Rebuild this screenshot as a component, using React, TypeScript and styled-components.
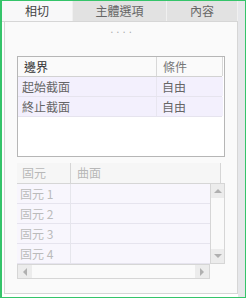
import React from 'react';
import styled, {createGlobalStyle} from 'styled-components';

const Global = createGlobalStyle`
  html, body { margin: 0; padding: 0; background: #fff; }
  body { font-family: "Noto Sans CJK TC", "Noto Sans", sans-serif; }
`;

const Frame = styled.div`
  width: 246px;
  height: 298px;
  box-sizing: border-box;
  border: 1px solid #35c46a;
  border-left-width: 2px;
  display: flex;
  background: #fff;
`;
const Main = styled.div`
  width: 236px;
  display: flex;
  flex-direction: column;
`;
const Strip = styled.div`
  flex: 1;
  background: #e6e7ea;
`;
const TabBar = styled.div`
  height: 20px;
  display: flex;
  border-bottom: 1px solid #d6d6d6;
`;
const Tab = styled.div`
  width: ${({w}: {w: number; active?: boolean}) => w}px;
  box-sizing: border-box;
  border-right: 1px solid #f0f0f0;
  background: ${({active}: {w: number; active?: boolean}) => active ? '#f8f8f9' : '#e2e2e2'};
  color: ${({active}: {w: number; active?: boolean}) => active ? '#444' : '#666'};
  font-size: 12px;
  display: flex;
  align-items: center;
  justify-content: center;
  line-height: 20px;
`;
const Body = styled.div`
  flex: 1;
  padding: 0 0 3px 2px;
  display: flex;
`;
const Panel = styled.div`
  flex: 1;
  border: 1px solid #d6d6d6;
  border-top: none;
  background: #fafafa;
  padding: 0 12px;
  display: flex;
  flex-direction: column;
`;
const Dots = styled.div`
  height: 34px;
  text-align: center;
  color: #aaa;
  font-size: 10px;
  letter-spacing: 3px;
  padding-left: 3px;
  line-height: 15px;
  font-family: "DejaVu Sans", sans-serif;
`;
const Boundary = styled.div`
  width: 208px;
  height: 101px;
  box-sizing: border-box;
  border: 1px solid #b6b6b6;
  background: #fff;
  padding-right: 2px;
`;
const Row = styled.div`
  display: grid;
  grid-template-columns: ${({cols}: {cols: string; head?: boolean}) => cols};
  height: 20px;
  box-sizing: border-box;
  border-bottom: 1px solid ${({head}: {cols: string; head?: boolean}) => head ? '#d2d2d2' : '#e6e4ee'};
`;
const Cell = styled.div`
  font-size: 12px;
  line-height: 19px;
  padding-left: ${({pad}: {pad: number; tone: string; bg: string; line?: string}) => pad}px;
  color: ${({tone}: {pad: number; tone: string; bg: string; line?: string}) => tone};
  background: ${({bg}: {pad: number; tone: string; bg: string; line?: string}) => bg};
  border-right: 1px solid ${({line}: {pad: number; tone: string; bg: string; line?: string}) => line ?? 'transparent'};
  white-space: nowrap;
  overflow: hidden;
`;
const Elements = styled.div`
  margin-top: 6px;
  width: 208px;
`;
const ElemHead = styled.div`
  display: grid;
  grid-template-columns: 54px 150px 4px;
  height: 21px;
  box-sizing: border-box;
  border-bottom: 1px solid #d6d6d6;
`;
const ElemBody = styled.div`
  display: flex;
  height: 80px;
`;
const ElemRows = styled.div`
  width: 193px;
`;
const VScroll = styled.div`
  width: 15px;
  box-sizing: border-box;
  border: 1px solid #d6d6d6;
  border-top: none;
  background: #fafafa;
  display: flex;
  flex-direction: column;
  justify-content: space-between;
`;
const HScroll = styled.div`
  width: 193px;
  height: 15px;
  box-sizing: border-box;
  border: 1px solid #d6d6d6;
  background: #fafafa;
  display: flex;
  justify-content: space-between;
`;
const Btn = styled.div`
  width: ${({horiz}: {horiz?: boolean}) => horiz ? '14px' : '13px'};
  height: ${({horiz}: {horiz?: boolean}) => horiz ? '13px' : '14px'};
  background: #ececec;
  display: flex;
  align-items: center;
  justify-content: center;
`;

const Arrow = ({dir}: {dir: 'up' | 'down' | 'left' | 'right'}) => {
  const pts = {
    up: '0,4 4,0 8,4',
    down: '0,0 8,0 4,4',
    left: '4,0 4,8 0,4',
    right: '0,0 0,8 4,4',
  }[dir];
  const vert = dir === 'up' || dir === 'down';
  return (
    <svg width={vert ? 8 : 4} height={vert ? 4 : 8}>
      <polygon points={pts} fill="#b0b0b0"/>
    </svg>
  );
};

const boundaries = ['起始截面', '終止截面'];
const elements = ['固元 1', '固元 2', '固元 3', '固元 4'];

export default function App() {
  return (
    <>
      <Global/>
      <Frame>
        <Main>
          <TabBar>
            <Tab w={71} active>相切</Tab>
            <Tab w={94}>主體選項</Tab>
            <Tab w={71}>內容</Tab>
          </TabBar>
          <Body>
            <Panel>
              <Dots>....</Dots>
              <Boundary>
                <Row cols="139px 66px" head>
                  <Cell pad={6} tone="#333" bg="#fafafa" line="#d8d8d8">邊界</Cell>
                  <Cell pad={6} tone="#777" bg="#fafafa" line="#d8d8d8">條件</Cell>
                </Row>
                {boundaries.map(b => (
                  <Row key={b} cols="139px 66px">
                    <Cell pad={4} tone="#666" bg="#f3f0fd" line="#e8e6f0">{b}</Cell>
                    <Cell pad={5} tone="#666" bg="#f3f0fd">自由</Cell>
                  </Row>
                ))}
              </Boundary>
              <Elements>
                <ElemHead>
                  <Cell pad={5} tone="#b8b8b8" bg="#f6f6f6" line="#d6d6d6">固元</Cell>
                  <Cell pad={6} tone="#b8b8b8" bg="#f6f6f6" line="#d6d6d6">曲面</Cell>
                  <Cell pad={0} tone="#b8b8b8" bg="#fafafa"/>
                </ElemHead>
                <ElemBody>
                  <ElemRows>
                    {elements.map(e => (
                      <Row key={e} cols="54px 139px">
                        <Cell pad={3} tone="#bbb" bg="#f8f6fd" line="#e6e6ec">{e}</Cell>
                        <Cell pad={0} tone="#bbb" bg="#f8f6fd"/>
                      </Row>
                    ))}
                  </ElemRows>
                  <VScroll>
                    <Btn><Arrow dir="up"/></Btn>
                    <Btn><Arrow dir="down"/></Btn>
                  </VScroll>
                </ElemBody>
                <HScroll>
                  <Btn horiz><Arrow dir="left"/></Btn>
                  <Btn horiz><Arrow dir="right"/></Btn>
                </HScroll>
              </Elements>
            </Panel>
          </Body>
        </Main>
        <Strip/>
      </Frame>
    </>
  );
}
